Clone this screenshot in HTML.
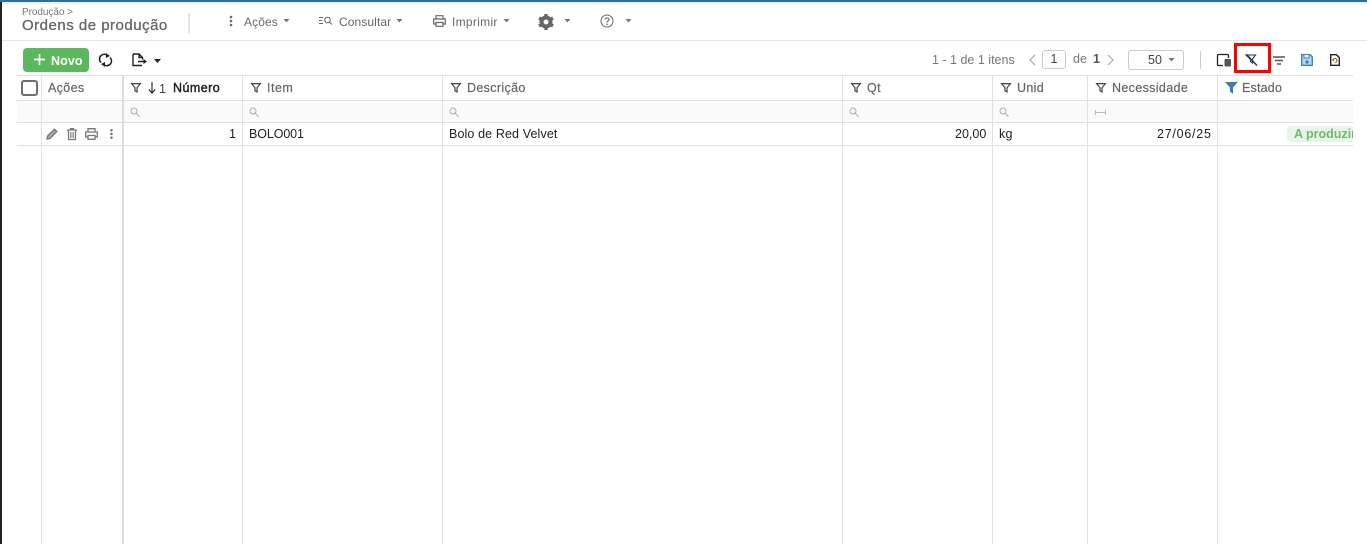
<!DOCTYPE html>
<html lang="pt"><head><meta charset="utf-8"><title>Ordens de produção</title>
<style>
html,body{margin:0;padding:0;width:1367px;height:544px;overflow:hidden;background:#fff;font-family:"Liberation Sans",sans-serif;}
.a{position:absolute;white-space:nowrap;}
.t{font-size:12px;line-height:16px;color:#666;letter-spacing:.1px;}
.h{font-size:12.5px;line-height:16px;color:#666;letter-spacing:.35px;-webkit-text-stroke:.2px #666;}
.d{font-size:12.5px;line-height:16px;color:#222;}
.v{position:absolute;top:75px;bottom:0;width:1px;background:#e0e0e0;}
.r{position:absolute;left:17px;width:1336px;height:1px;background:#e0e0e0;}
svg{position:absolute;overflow:visible;}
</style></head><body>
<div class="a" style="left:0;top:0;width:2px;height:544px;background:#222"></div>
<div class="a" style="left:0;top:0;width:1367px;height:2px;background:#2f6ea5"></div>
<div class="a" style="left:2px;top:2px;width:1365px;height:2px;background:#eef0f1"></div>
<div class="a" style="left:2px;top:40px;width:1365px;height:1px;background:#e6e6e6"></div>

<div class="a" style="left:22px;top:7px;font-size:10px;line-height:12px;color:#777;letter-spacing:-.05px">Produção &gt;</div>
<div class="a" style="left:22px;top:17px;font-size:15px;line-height:18px;color:#666;letter-spacing:.5px;-webkit-text-stroke:.3px #666">Ordens de produção</div>
<div class="a" style="left:188px;top:13px;width:2px;height:20px;background:#e4e4e4"></div>

<svg style="left:229px;top:15px" width="4" height="12" viewBox="0 0 4 12"><g fill="#666"><circle cx="2" cy="2" r="1.3"/><circle cx="2" cy="6" r="1.3"/><circle cx="2" cy="10" r="1.3"/></g></svg>
<div class="a t" style="left:244px;top:14px">Ações</div>
<svg style="left:283px;top:19px" width="7" height="4"><path d="M.5 0h6L3.500 3.500z" fill="#777"/></svg>

<svg style="left:319px;top:16px" width="14" height="10" viewBox="0 0 14 10"><path d="M0 1.500h4M0 4.500h3M0 7.500h4" stroke="#666" stroke-width="1" fill="none"/><circle cx="8.500" cy="4" r="2.800" fill="none" stroke="#666"/><path d="M10.500 6l2.500 2.500" stroke="#666" fill="none"/></svg>
<div class="a t" style="left:339px;top:14px">Consultar</div>
<svg style="left:396px;top:19px" width="7" height="4"><path d="M.5 0h6L3.500 3.500z" fill="#777"/></svg>

<svg style="left:433px;top:15px" width="13" height="12" viewBox="0 0 13 12"><path d="M3 4V.7h7V4M3 9H.7V4h11.600v5H10M3 7.500h7v3.800H3z" fill="none" stroke="#666" stroke-width="1.200"/></svg>
<div class="a t" style="left:452px;top:14px;letter-spacing:.3px">Imprimir</div>
<svg style="left:503px;top:19px" width="7" height="4"><path d="M.5 0h6L3.500 3.500z" fill="#777"/></svg>

<svg style="left:538px;top:14px" width="16" height="16" viewBox="0 0 16 16"><circle cx="8" cy="8" r="4.500" fill="none" stroke="#666" stroke-width="4"/><g fill="#666"><rect x="6.300" y="0" width="3.400" height="3"/><rect x="6.300" y="0" width="3.400" height="3" transform="rotate(60 8 8)"/><rect x="6.300" y="0" width="3.400" height="3" transform="rotate(120 8 8)"/><rect x="6.300" y="0" width="3.400" height="3" transform="rotate(180 8 8)"/><rect x="6.300" y="0" width="3.400" height="3" transform="rotate(240 8 8)"/><rect x="6.300" y="0" width="3.400" height="3" transform="rotate(300 8 8)"/></g></svg>
<svg style="left:564px;top:19px" width="7" height="4"><path d="M.5 0h6L3.500 3.500z" fill="#777"/></svg>

<svg style="left:600px;top:14px" width="14" height="14" viewBox="0 0 14 14"><circle cx="7" cy="7" r="6" fill="none" stroke="#666" stroke-width="1"/><path d="M5 5.500C5 3.500 9 3.500 9 5.500C9 7 7 7 7 8.500" fill="none" stroke="#666" stroke-width="1.100"/><circle cx="7" cy="10.300" r=".8" fill="#666"/></svg>
<svg style="left:625px;top:19px" width="7" height="4"><path d="M.5 0h6L3.500 3.500z" fill="#777"/></svg>

<div class="a" style="left:23px;top:48px;width:66px;height:24px;background:#5cb85c;border-radius:4px"></div>
<svg style="left:34px;top:54px" width="11" height="11"><path d="M5.500 0v11M0 5.500h11" stroke="#fff" stroke-width="1.700"/></svg>
<div class="a" style="left:51px;top:53px;font-size:12.5px;line-height:16px;color:#fff;font-weight:700;letter-spacing:.1px">Novo</div>

<svg style="left:99px;top:53px" width="13" height="14" viewBox="0 0 13 14"><path d="M2 9.500A4.700 4.700 0 0 1 8.500 2.600M11 4.500A4.700 4.700 0 0 1 4.500 11.400" fill="none" stroke="#222" stroke-width="1.500"/><path d="M7 0L11 3L7 5zM6 14L2 11L6 9z" fill="#222"/></svg>
<svg style="left:132px;top:53px" width="15" height="14" viewBox="0 0 15 14"><path d="M1 1h6l3.500 3.500v2M1 1v11.500h9M7 1v3.500h3.500" fill="none" stroke="#222" stroke-width="1.400"/><path d="M6 8.500h6" stroke="#222" stroke-width="1.500"/><path d="M11.500 6L15 8.500L11.500 11z" fill="#222"/></svg>
<svg style="left:154px;top:59px" width="7" height="4"><path d="M0 0h7L3.500 4z" fill="#222"/></svg>

<div class="a" style="left:932px;top:52px;font-size:12.5px;line-height:16px;color:#777">1 - 1 de 1 itens</div>
<svg style="left:1029px;top:54px" width="7" height="12"><path d="M6 1L1 6l5 5" fill="none" stroke="#aaa" stroke-width="1.200"/></svg>
<div class="a" style="left:1042px;top:50px;width:22px;height:17px;border:1px solid #ccc;border-radius:3px;font-size:12.500px;line-height:17px;text-align:center;color:#444">1</div>
<div class="a" style="left:1073px;top:51px;font-size:12.5px;line-height:16px;color:#777">de</div>
<div class="a" style="left:1093px;top:51px;font-size:12.5px;line-height:16px;color:#555;font-weight:700">1</div>
<svg style="left:1107px;top:54px" width="7" height="12"><path d="M1 1l5 5-5 5" fill="none" stroke="#aaa" stroke-width="1.200"/></svg>
<div class="a" style="left:1128px;top:50px;width:54px;height:18px;border:1px solid #ccc;border-radius:3px"></div>
<div class="a" style="left:1148px;top:52px;font-size:12.5px;line-height:16px;color:#444">50</div>
<svg style="left:1168px;top:58px" width="7" height="4"><path d="M.5 0h6L3.500 3.500z" fill="#777"/></svg>
<div class="a" style="left:1200px;top:51px;width:1px;height:18px;background:#ccc"></div>

<svg style="left:1217px;top:54px" width="14" height="13" viewBox="0 0 14 13"><path d="M6 11.500H1.500a1 1 0 0 1-1-1V1.500a1 1 0 0 1 1-1h9a1 1 0 0 1 1 1V4" fill="none" stroke="#222" stroke-width="1.300"/><rect x="7.500" y="5" width="6.500" height="7.500" rx="1" fill="#555"/></svg>
<div class="a" style="left:1234px;top:43px;width:31px;height:24px;border:3px solid #f00"></div>
<svg style="left:1245px;top:54px" width="13" height="12" viewBox="0 0 13 12"><path d="M1 1h9.500L7.500 5v4L5.500 7.500V5.500z" fill="none" stroke="#333" stroke-width="1.100"/><path d="M1.500 .5L12 11.500" stroke="#1b3a57" stroke-width="1.400"/></svg>
<svg style="left:1273px;top:56px" width="12" height="9"><path d="M0 1h12M2 4.500h8M4 8h4" stroke="#555" stroke-width="1.600"/></svg>
<svg style="left:1301px;top:54px" width="12" height="12" viewBox="0 0 12 12"><path d="M.7.700h8.400L11.300 3v8.300H.7z" fill="#bcd8ee" stroke="#3d85c0" stroke-width="1.400"/><path d="M3 1v3h5V1" fill="#eaf3fa" stroke="#3d85c0"/><circle cx="6" cy="8" r="1.700" fill="#3d85c0"/></svg>
<svg style="left:1330px;top:54px" width="10" height="12" viewBox="0 0 10 12"><path d="M.7.700h5.700L9.300 3.500v7.800H.7z" fill="none" stroke="#222" stroke-width="1.400"/><path d="M3 6.500a2 2 0 1 1 2 2" fill="none" stroke="#8a5a2a" stroke-width="1.100"/><path d="M2 5.500l2 .2-.8 1.500z" fill="#222"/></svg>

<!-- grid -->
<div class="a" style="left:17px;top:101px;width:1336px;height:21px;background:#fafafa"></div>
<div class="r" style="top:75px"></div><div class="r" style="top:100px"></div><div class="r" style="top:122px"></div><div class="r" style="top:145px"></div>
<div class="v" style="left:41px"></div>
<div class="v" style="left:122px;width:2px;background:#dcdcdc"></div>
<div class="v" style="left:242px"></div>
<div class="v" style="left:442px"></div>
<div class="v" style="left:842px"></div>
<div class="v" style="left:992px"></div>
<div class="v" style="left:1087px"></div>
<div class="v" style="left:1217px"></div>

<div class="a" style="left:21px;top:80px;width:13px;height:12px;border:2px solid #6e6e6e;border-radius:3px"></div>
<div class="a h" style="left:48px;top:80px">Ações</div>

<svg style="left:131px;top:83px" width="10" height="10"><path d="M.6.600h8.800L6 4.800v4.200L4 7.800V4.800z" fill="none" stroke="#444" stroke-width="1.200"/></svg>
<svg style="left:148px;top:82px" width="8" height="12"><path d="M4 0v10.500M.8 7.500L4 11l3.200-3.500" fill="none" stroke="#222" stroke-width="1.100"/></svg>
<div class="a" style="left:159px;top:81px;font-size:12.500px;line-height:16px;color:#444">1</div>
<div class="a" style="left:173px;top:80px;font-size:12.500px;line-height:16px;color:#222;letter-spacing:.45px;-webkit-text-stroke:.4px #222">Número</div>

<svg style="left:251px;top:83px" width="10" height="10"><path d="M.6.600h8.800L6 4.800v4.200L4 7.800V4.800z" fill="none" stroke="#444" stroke-width="1.200"/></svg>
<div class="a h" style="left:267px;top:80px;letter-spacing:.5px">Item</div>
<svg style="left:451px;top:83px" width="10" height="10"><path d="M.6.600h8.800L6 4.800v4.200L4 7.800V4.800z" fill="none" stroke="#444" stroke-width="1.200"/></svg>
<div class="a h" style="left:467px;top:80px">Descrição</div>
<svg style="left:851px;top:83px" width="10" height="10"><path d="M.6.600h8.800L6 4.800v4.200L4 7.800V4.800z" fill="none" stroke="#444" stroke-width="1.200"/></svg>
<div class="a h" style="left:867px;top:80px">Qt</div>
<svg style="left:1001px;top:83px" width="10" height="10"><path d="M.6.600h8.800L6 4.800v4.200L4 7.800V4.800z" fill="none" stroke="#444" stroke-width="1.200"/></svg>
<div class="a h" style="left:1017px;top:80px">Unid</div>
<svg style="left:1096px;top:83px" width="10" height="10"><path d="M.6.600h8.800L6 4.800v4.200L4 7.800V4.800z" fill="none" stroke="#444" stroke-width="1.200"/></svg>
<div class="a h" style="left:1112px;top:80px">Necessidade</div>
<svg style="left:1225px;top:82px" width="13" height="12"><path d="M0 0h13L8 5.500V12L5 9.500V5.500z" fill="#3a7ab5"/></svg>
<div class="a h" style="left:1242px;top:80px;letter-spacing:.2px">Estado</div>

<svg style="left:130px;top:107px" width="10" height="11"><circle cx="4" cy="4" r="3" fill="none" stroke="#aaa"/><path d="M6.200 6.200L9.500 9.800" stroke="#aaa"/></svg>
<svg style="left:249px;top:107px" width="10" height="11"><circle cx="4" cy="4" r="3" fill="none" stroke="#aaa"/><path d="M6.200 6.200L9.500 9.800" stroke="#aaa"/></svg>
<svg style="left:449px;top:107px" width="10" height="11"><circle cx="4" cy="4" r="3" fill="none" stroke="#aaa"/><path d="M6.200 6.200L9.500 9.800" stroke="#aaa"/></svg>
<svg style="left:849px;top:107px" width="10" height="11"><circle cx="4" cy="4" r="3" fill="none" stroke="#aaa"/><path d="M6.200 6.200L9.500 9.800" stroke="#aaa"/></svg>
<svg style="left:999px;top:107px" width="10" height="11"><circle cx="4" cy="4" r="3" fill="none" stroke="#aaa"/><path d="M6.200 6.200L9.500 9.800" stroke="#aaa"/></svg>
<svg style="left:1095px;top:110px" width="11" height="5"><path d="M.5 0v5M10.500 0v5M.5 2.500h10" stroke="#bbb" stroke-width="1"/></svg>

<svg style="left:46px;top:128px" width="12" height="12" viewBox="0 0 12 12"><path d="M1 11l.6-3L8.500 1.200l2.300 2.300L4 10.400z" fill="#aaa" stroke="#777" stroke-width="1.300"/></svg>
<svg style="left:67px;top:128px" width="10" height="12" viewBox="0 0 10 12"><path d="M0 2h10M3.500 2V.6h3V2M1.500 2.500v9h7v-9M3.800 4v6M6.200 4v6" fill="none" stroke="#777" stroke-width="1.200"/></svg>
<svg style="left:85px;top:128px" width="13" height="12" viewBox="0 0 13 12"><path d="M3 4V.7h7V4M3 9H.7V4h11.600v5H10M3 7.500h7v3.800H3z" fill="none" stroke="#777" stroke-width="1.300"/></svg>
<svg style="left:110px;top:129px" width="3" height="10"><g fill="#666"><circle cx="1.500" cy="1.300" r="1.200"/><circle cx="1.500" cy="5" r="1.200"/><circle cx="1.500" cy="8.700" r="1.200"/></g></svg>

<div class="a d" style="left:229px;top:126px">1</div>
<div class="a d" style="left:249px;top:126px;letter-spacing:-.1px">BOLO001</div>
<div class="a d" style="left:449px;top:126px;letter-spacing:.12px">Bolo de Red Velvet</div>
<div class="a d" style="left:955px;top:126px">20,00</div>
<div class="a d" style="left:999px;top:126px;letter-spacing:.3px">kg</div>
<div class="a d" style="left:1157px;top:126px;letter-spacing:.75px">27/06/25</div>
<div class="a" style="left:1287px;top:126px;width:66px;height:16px;overflow:hidden;background:#e9f5e9;border-radius:4px 0 0 4px"><span class="a" style="left:7px;top:0;font-size:12.500px;line-height:16px;font-weight:700;color:#6cbb6c">A produzir</span></div>
<div class="a" style="left:1353px;top:75px;width:14px;height:469px;background:#fff"></div>
</body></html>
